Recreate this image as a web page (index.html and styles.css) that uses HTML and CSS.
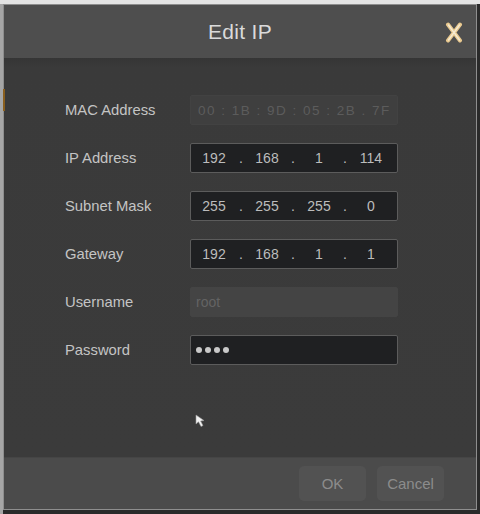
FILE: index.html
```html
<!DOCTYPE html>
<html>
<head>
<meta charset="utf-8">
<link rel="stylesheet" href="styles.css">
</head>
<body>
<div class="dialog">
  <div class="header">
    <span class="title">Edit IP</span>
    <svg class="close" viewBox="0 0 18 21" width="18" height="21">
      <path d="M3 2.5 L15 18.5 M15 2.5 L3 18.5" stroke="#e9c98f" stroke-width="4" stroke-linecap="round"/>
      <path d="M3.5 3 L14.5 18 M14.5 3 L3.5 18" stroke="#f6ebd2" stroke-width="1.4" stroke-linecap="round"/>
    </svg>
  </div>
  <div class="content">
    <span class="edge-mark"></span>
    <div class="row">
      <span class="label">MAC Address</span>
      <div class="field disabled mac">00 : 1B : 9D : 05 : 2B . 7F</div>
    </div>
    <div class="row">
      <span class="label">IP Address</span>
      <div class="field ip"><span>192</span><i>.</i><span>168</span><i>.</i><span>1</span><i>.</i><span>114</span></div>
    </div>
    <div class="row">
      <span class="label">Subnet Mask</span>
      <div class="field ip"><span>255</span><i>.</i><span>255</span><i>.</i><span>255</span><i>.</i><span>0</span></div>
    </div>
    <div class="row">
      <span class="label">Gateway</span>
      <div class="field ip"><span>192</span><i>.</i><span>168</span><i>.</i><span>1</span><i>.</i><span>1</span></div>
    </div>
    <div class="row">
      <span class="label">Username</span>
      <div class="field disabled user">root</div>
    </div>
    <div class="row">
      <span class="label">Password</span>
      <div class="field pass"><b></b><b></b><b></b><b></b></div>
    </div>
    <svg class="cursor" viewBox="0 0 12 14" width="12" height="14">
      <path d="M1 1 L1 10 L3.5 7.8 L6 12.5 L8 11.5 L5.6 7 L9 6.6 Z" fill="#f2f2f2" stroke="#9a9a9a" stroke-width="0.6"/>
    </svg>
  </div>
  <div class="footer">
    <button class="btn">OK</button>
    <button class="btn">Cancel</button>
  </div>
</div>
</body>
</html>
```
FILE: styles.css
```css
html, body {
  margin: 0;
  height: 514px;
  overflow: hidden;
}
body {
  background: linear-gradient(to right, #a6a6a6 0, #a6a6a6 3px, #2a2a2a 3px);
  box-shadow: inset 0 4px 0 #e4e4e4;
  padding: 4px 3px 0 3px;
  box-sizing: border-box;
  font-family: "Liberation Sans", Arial, sans-serif;
}
.dialog {
  width: 474px;
  height: 506px;
  box-sizing: border-box;
  border: 1px solid #8e8e8e;
  display: flex;
  flex-direction: column;
  background: #3b3b3b;
}
.header {
  height: 53px;
  flex: none;
  background: #4e4e4e;
  display: flex;
  align-items: center;
  justify-content: center;
  position: relative;
}
.title {
  color: #dadada;
  font-size: 21px;
  letter-spacing: 0.3px;
}
.close {
  position: absolute;
  right: 13px;
  top: 17px;
}
.content {
  flex: 1;
  position: relative;
  background: linear-gradient(#353535 0, #3a3a3a 10px, #3b3b3b 100%);
  padding-top: 37px;
  display: flex;
  flex-direction: column;
  gap: 18px;
}
.edge-mark {
  position: absolute;
  left: -1px;
  top: 31px;
  width: 2px;
  height: 22px;
  background: #8a5f1e;
}
.row {
  display: flex;
  align-items: center;
  height: 30px;
}
.label {
  width: 125px;
  padding-left: 61px;
  color: #c4c4c4;
  font-size: 14.8px;
}
.field {
  width: 208px;
  height: 30px;
  box-sizing: border-box;
  border: 1px solid #5c5c5c;
  border-radius: 2px;
  background: #1f2022;
  color: #bcbcbc;
  font-size: 14px;
  display: flex;
  align-items: center;
}
.field.disabled {
  background: #3f3f3f;
  border-color: #424242;
  color: #5c5c5c;
}
.field.mac {
  padding-left: 7px;
  letter-spacing: 1.5px;
  font-size: 13.5px;
  white-space: pre;
}
.field.user {
  background: #444444;
  border-color: #444444;
  padding-left: 5px;
  color: #636363;
}
.field.ip span {
  width: 44px;
  text-align: center;
}
.field.ip span:first-child {
  width: 46px;
}
.field.ip i {
  font-style: normal;
  width: 8px;
  text-align: center;
}
.field.pass {
  padding-left: 5px;
  gap: 3px;
}
.field.pass b {
  width: 6px;
  height: 6px;
  border-radius: 50%;
  background: #c9c9c9;
}
.cursor {
  position: absolute;
  left: 191px;
  top: 356px;
}
.footer {
  height: 51px;
  flex: none;
  background: #4b4b4b;
  display: flex;
  align-items: center;
  justify-content: flex-end;
  gap: 11px;
  padding-right: 32px;
  border-top: 1px solid #454545;
}
.btn {
  width: 67px;
  height: 35px;
  border: none;
  border-radius: 5px;
  background: #525252;
  color: #8c8c8c;
  font-family: "Liberation Sans", Arial, sans-serif;
  font-size: 15px;
  padding: 0;
}
```
